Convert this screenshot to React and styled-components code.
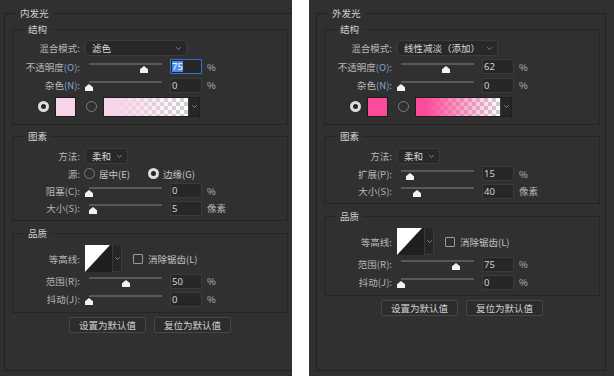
import React from 'react';
import styled, { createGlobalStyle, css } from 'styled-components';

const GlobalStyle = createGlobalStyle`
  html, body { margin: 0; padding: 0; background: #ffffff; }
  body { font-family: "Noto Sans CJK SC", "Noto Sans", sans-serif; }
  * { box-sizing: border-box; }
`;

const Page = styled.div`
  display: flex;
  gap: 17px;
  width: 614px;
  height: 376px;
  overflow: hidden;
`;

const Panel = styled.div`
  flex: none;
  width: ${p => p.$width}px;
  height: 376px;
  padding: 13px 0 0 ${p => p.$inset}px;
  background: #303030;
  overflow: hidden;
  color: #c0c0c0;
  font-size: 9.5px;
`;

// 바깥 틀 (테두리 + 제목)
const Dialog = styled.section`
  position: relative;
  width: 290px;
  height: 358px;
  padding: 0 0 0 7px;
  border: 1px solid #222222;
`;

// 테두리 선 위에 얹히는 제목 줄
const CaptionBar = styled.div`
  position: absolute;
  top: -7px;
  left: 0;
  right: 0;
  display: flex;
  padding-left: 11px;
  pointer-events: none;
`;

const Caption = styled.span`
  padding: 0 4px;
  line-height: 12px;
  background: #303030;
  color: #d2d2d2;
  white-space: nowrap;
`;

const Group = styled.div`
  position: relative;
  width: 276px;
  margin-top: ${p => p.$top}px;
  padding: ${p => p.$pad};
  border: 1px solid #252525;
  display: flex;
  flex-direction: column;
`;

const Row = styled.div`
  display: flex;
  align-items: center;
  height: ${p => p.$h || 18}px;
  margin-top: ${p => p.$mt || 0}px;
  white-space: nowrap;
`;

const Label = styled.span`
  flex: none;
  width: 67px;
  margin-right: 4px;
  text-align: right;
  color: #b6b6b6;
`;

const Key = styled.span`
  color: ${p => (p.$blue ? '#84a9d6' : 'inherit')};
`;

const Select = styled.div`
  flex: none;
  display: flex;
  align-items: center;
  justify-content: space-between;
  width: ${p => p.$w}px;
  height: 16px;
  margin-left: 1px;
  padding: 0 5px 0 6px;
  background: #282828;
  border: 1px solid #3b3b3b;
  border-radius: 2px;
  color: #d8d8d8;
`;

const ChevronSvg = styled.svg`
  display: block;
  width: 5px;
  height: 3px;
  flex: none;
`;

const Chevron = () => (
  <ChevronSvg viewBox="0 0 5 3">
    <polyline points="0.3,0.3 2.5,2.6 4.7,0.3" fill="none" stroke="#9c9c9c" strokeWidth="0.8" />
  </ChevronSvg>
);

const SliderBox = styled.div`
  position: relative;
  flex: none;
  width: 82px;
  height: 14px;
`;

const Track = styled.div`
  position: absolute;
  top: 3px;
  left: 5px;
  right: 4px;
  height: 2px;
  background: #595959;
`;

const ThumbSvg = styled.svg`
  position: absolute;
  top: 6px;
  width: 8px;
  height: 7px;
  display: block;
`;

const Slider = ({ pos }) => (
  <SliderBox>
    <Track />
    <ThumbSvg viewBox="0 0 8 7" style={{ left: 5 + pos * 73 - 4 }}>
      <polygon points="4,0 8,3.2 8,7 0,7 0,3.2" fill="#f2f2f2" />
    </ThumbSvg>
  </SliderBox>
);

const NumBox = styled.div`
  flex: none;
  display: flex;
  align-items: center;
  width: 32px;
  height: 15px;
  margin-left: 4px;
  padding-left: 1px;
  background: #272727;
  border: 1px solid ${p => (p.$focus ? '#2f72d6' : '#3a3a3a')};
  color: #d2d2d2;
  font-family: "Noto Sans", "Liberation Sans", sans-serif;
  font-size: 9.5px;
`;

const Selected = styled.span`
  background: #4a8ce6;
  color: #ffffff;
  line-height: 11px;
`;

const Unit = styled.span`
  margin-left: 5px;
  color: #b6b6b6;
`;

const Radio = styled.span`
  flex: none;
  width: 11px;
  height: 11px;
  margin-left: ${p => p.$ml || 0}px;
  border-radius: 50%;
  ${p => (p.$on
    ? css`
        background: #262626;
        border: 3px solid #dedede;
      `
    : css`
        border: 1px solid #7c7c7c;
      `)}
`;

const Swatch = styled.div`
  flex: none;
  width: 21px;
  height: 20px;
  margin-left: 6px;
  background: ${p => p.$color};
  border: 1px solid #1c1c1c;
`;

const GradientPick = styled.div`
  flex: none;
  display: flex;
  height: 20px;
  margin-left: 6px;
  border: 1px solid #1e1e1e;
`;

const GradientFill = styled.div`
  width: 84px;
  background:
    linear-gradient(to right, ${p => p.$from} 12%, ${p => p.$to}),
    repeating-conic-gradient(#cfcfcf 0 25%, #ffffff 0 50%) 0 0 / 8px 8px;
`;

const DropStrip = styled.div`
  display: flex;
  align-items: center;
  justify-content: center;
  width: ${p => p.$w}px;
  background: #262626;
  border-left: 1px solid #3a3a3a;
`;

const Contour = styled.div`
  flex: none;
  display: flex;
  height: 27px;
  margin-left: 1px;
  border-right: 1px solid #3a3a3a;
  border-bottom: 1px solid #3a3a3a;
`;

const ContourArt = styled.svg`
  display: block;
  width: 27px;
  height: 27px;
`;

const Check = styled.span`
  flex: none;
  width: 10px;
  height: 10px;
  margin: 0 5px 0 11px;
  border: 1px solid #9a9a9a;
  border-radius: 1px;
`;

const Option = styled.span`
  margin-left: 4px;
  color: #c6c6c6;
`;

const ButtonBar = styled.div`
  display: flex;
  justify-content: center;
  gap: 8px;
  width: 276px;
  margin-top: 4px;
`;

const Button = styled.button`
  width: 77px;
  height: 16px;
  padding: 0;
  background: #2c2c2c;
  border: 1px solid #474747;
  border-radius: 2px;
  color: #d0d0d0;
  font-family: inherit;
  font-size: 9.5px;
  line-height: 14px;
`;

const Title = ({ children }) => (
  <CaptionBar>
    <Caption>{children}</Caption>
  </CaptionBar>
);

const Field = ({ text, hot, blue }) => (
  <Label>
    {text}
    {hot && <Key $blue={blue}>({hot})</Key>}:
  </Label>
);

const SliderRow = ({ text, hot, blue, value, pos, unit, focus, h }) => (
  <Row $h={h}>
    <Field text={text} hot={hot} blue={blue} />
    <Slider pos={pos} />
    <NumBox $focus={focus}>{focus ? <Selected>{value}</Selected> : value}</NumBox>
    <Unit>{unit}</Unit>
  </Row>
);

const GlowPanel = ({ width, inset, title, blend, blendW, opacity, color, fade, edge, range }) => (
  <Panel $width={width} $inset={inset}>
    <Dialog>
      <Title>{title}</Title>

      <Group $top={15} $pad="9px 0 7px">
        <Title>结构</Title>
        <Row>
          <Field text="混合模式" />
          <Select $w={blendW}>
            <span>{blend}</span>
            <Chevron />
          </Select>
        </Row>
        <SliderRow text="不透明度" hot="O" blue value={opacity.value} pos={opacity.value / 100} unit="%" focus={opacity.focus} h={19} />
        <SliderRow text="杂色" hot="N" blue value="0" pos={0} unit="%" />
        <Row $h={21} $mt={2}>
          <Radio $on $ml={25} />
          <Swatch $color={color} />
          <Radio $ml={10} />
          <GradientPick>
            <GradientFill $from={color} $to={fade} />
            <DropStrip $w={11}>
              <Chevron />
            </DropStrip>
          </GradientPick>
        </Row>
      </Group>

      <Group $top={11} $pad="10px 0 3px">
        <Title>图素</Title>
        <Row>
          <Field text="方法" />
          <Select $w={43}>
            <span>柔和</span>
            <Chevron />
          </Select>
        </Row>
        {edge.source && (
          <Row $h={17}>
            <Field text="源" />
            <Radio />
            <Option>居中(E)</Option>
            <Radio $on $ml={18} />
            <Option>边缘(G)</Option>
          </Row>
        )}
        {edge.rows.map(r => (
          <SliderRow key={r.text} h={17.5} {...r} />
        ))}
      </Group>

      <Group $top={12} $pad="11px 0 4px">
        <Title>品质</Title>
        <Row $h={27}>
          <Field text="等高线" />
          <Contour>
            <ContourArt viewBox="0 0 27 27">
              <rect width="27" height="27" fill="#1f1f1f" />
              <polygon points="0,0 25,0 0,27" fill="#ffffff" />
            </ContourArt>
            <DropStrip $w={9}>
              <Chevron />
            </DropStrip>
          </Contour>
          <Check />
          <span>消除锯齿(L)</span>
        </Row>
        <SliderRow text="范围" hot="R" value={range} pos={range / 100} unit="%" h={18} />
        <SliderRow text="抖动" hot="J" value="0" pos={0} unit="%" h={18} />
      </Group>

      <ButtonBar>
        <Button>设置为默认值</Button>
        <Button>复位为默认值</Button>
      </ButtonBar>
    </Dialog>
  </Panel>
);

const inner = {
  source: true,
  rows: [
    { text: '阻塞', hot: 'C', value: '0', pos: 0, unit: '%' },
    { text: '大小', hot: 'S', value: '5', pos: 0.055, unit: '像素' },
  ],
};

const outer = {
  source: false,
  rows: [
    { text: '扩展', hot: 'P', value: '15', pos: 0.13, unit: '%' },
    { text: '大小', hot: 'S', value: '40', pos: 0.215, unit: '像素' },
  ],
};

export default function App() {
  return (
    <>
      <GlobalStyle />
      <Page>
        <GlowPanel
          width={292}
          inset={4}
          title="内发光"
          blend="滤色"
          blendW={102}
          opacity={{ value: '75', focus: true }}
          color="#f7d4ea"
          fade="rgba(247, 212, 234, 0)"
          edge={inner}
          range={50}
        />
        <GlowPanel
          width={305}
          inset={7}
          title="外发光"
          blend="线性减淡（添加）"
          blendW={101}
          opacity={{ value: '62', focus: false }}
          color="#fd4b9b"
          fade="rgba(253, 75, 155, 0)"
          edge={outer}
          range={75}
        />
      </Page>
    </>
  );
}
